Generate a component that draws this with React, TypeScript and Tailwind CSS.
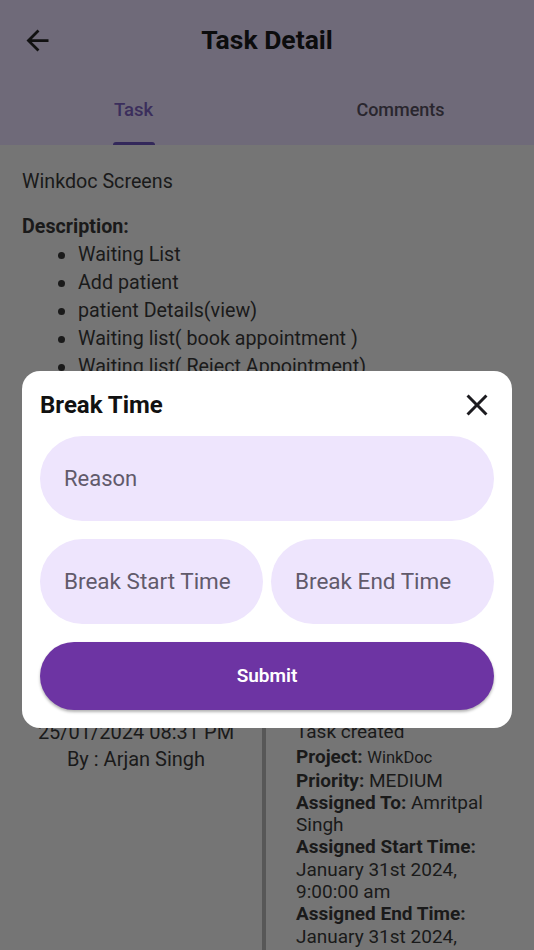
import React from "react";

const font = { fontFamily: "Roboto, 'Noto Sans', sans-serif" };

export default function App() {
  const bullets = [
    "Waiting List",
    "Add patient",
    "patient Details(view)",
    "Waiting list( book appointment )",
    "Waiting list( Reject Appointment)",
  ];
  return (
    <div className="relative h-[950px] w-[534px] overflow-hidden bg-[#757575]" style={font}>
      {/* Header */}
      <div className="bg-[#6f6a79]">
        <div className="flex h-[80px] items-center">
          <div className="w-[54px] pl-[21px]">
            <svg width="33" height="33" viewBox="0 0 24 24" fill="#111111">
              <path d="M20 11H7.83l5.59-5.59L12 4l-8 8 8 8 1.41-1.41L7.83 13H20v-2z" />
            </svg>
          </div>
          <div className="flex-1 text-center text-[26.5px] font-bold text-[#0c0c0d]">Task Detail</div>
          <div className="w-[54px]" />
        </div>
        <div className="grid h-[65px] grid-cols-2">
          <div className="flex flex-col items-center pt-[19px]">
            <div className="text-[18.5px] font-medium leading-[22px] text-[#3b2e5c]">Task</div>
            <div className="flex-1" />
            <div className="h-[3px] w-[42px] rounded-t-[3px] bg-[#33285a]" />
          </div>
          <div className="flex flex-col items-center pt-[19px]">
            <div className="text-[18px] font-medium leading-[22px] text-[#29262e]">Comments</div>
          </div>
        </div>
      </div>

      {/* Body */}
      <div className="px-[22px] pt-[23px] text-[19.7px] text-[#1a1a1a]">
        <div className="leading-[28px]">Winkdoc Screens</div>
        <div className="mt-[17px] font-bold leading-[28px]">Description:</div>
        <ul className="pl-[36px]">
          {bullets.map((b) => (
            <li key={b} className="flex items-center leading-[28px]">
              <span className="mr-[13px] h-[7px] w-[7px] rounded-full bg-[#1a1a1a]" />
              <span>{b}</span>
            </li>
          ))}
        </ul>
      </div>
      <div className="h-[340px]" />

      {/* Timeline */}
      <div className="flex text-[#1a1a1a]">
        <div className="w-[262px] pl-[10px] text-center text-[20px]">
          <div className="leading-[22px]">25/01/2024 08:31 PM</div>
          <div className="mt-[5px] leading-[22px]">By : Arjan Singh</div>
        </div>
        <div className="h-[300px] w-[4px] self-stretch bg-[#575757]" />
        <div className="w-[232px] pl-[30px] text-[19px] leading-[22.3px]">
          <div className="mb-[3px]">Task created</div>
          <div>
            <span className="font-bold">Project:</span> <span className="text-[16.5px]">WinkDoc</span>
          </div>
          <div>
            <span className="font-bold">Priority:</span> MEDIUM
          </div>
          <div>
            <span className="font-bold">Assigned To:</span> Amritpal Singh
          </div>
          <div className="font-bold">Assigned Start Time:</div>
          <div>January 31st 2024, 9:00:00 am</div>
          <div className="font-bold">Assigned End Time:</div>
          <div>January 31st 2024, 6:00:00 pm</div>
        </div>
      </div>

      {/* Dialog */}
      <div className="absolute left-[22px] top-[371px] w-[490px] rounded-[18px] bg-white p-[18px]">
        <div className="flex h-[32px] items-center justify-between">
          <div className="text-[24px] font-bold text-[#111111]">Break Time</div>
          <svg width="36" height="36" viewBox="0 0 24 24" fill="#1c1b1f" className="-mr-[1px]">
            <path d="M19 6.41L17.59 5 12 10.59 6.41 5 5 6.41 10.59 12 5 17.59 6.41 19 12 13.41 17.59 19 19 17.59 13.41 12z" />
          </svg>
        </div>
        <div className="mt-[15px] flex h-[85px] items-center rounded-full bg-[#eee5fd] pl-[24px] text-[22px] text-[#615a6b]">
          Reason
        </div>
        <div className="mt-[18px] grid h-[85px] grid-cols-2 gap-[8px]">
          <div className="flex items-center rounded-full bg-[#eee5fd] pl-[24px] text-[22.5px] text-[#615a6b]">
            Break Start Time
          </div>
          <div className="flex items-center rounded-full bg-[#eee5fd] pl-[24px] text-[22.5px] text-[#615a6b]">
            Break End Time
          </div>
        </div>
        <div className="mt-[18px] flex h-[68px] items-center justify-center rounded-full bg-[#6d34a3] text-[19px] font-semibold text-white shadow-[0_2px_3px_rgba(0,0,0,0.3)]">
          Submit
        </div>
      </div>
    </div>
  );
}
